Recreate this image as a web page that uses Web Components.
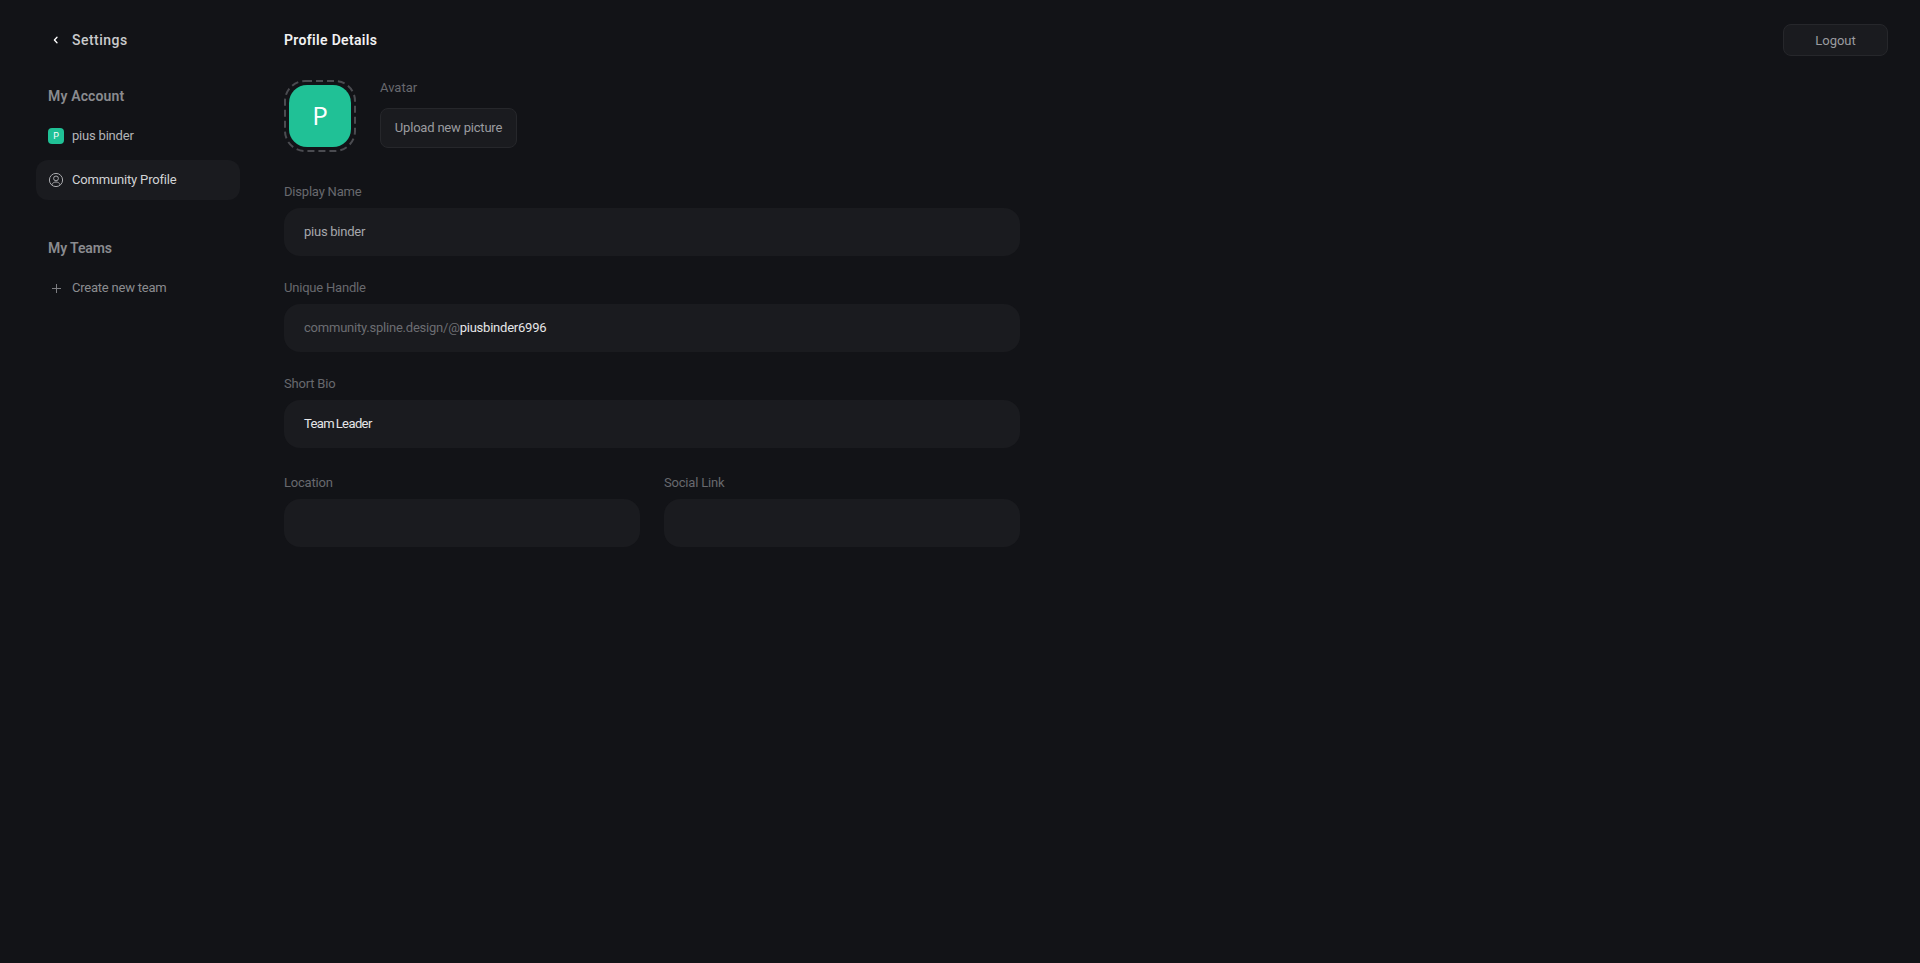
<!DOCTYPE html>
<html lang="en">
<head>
<meta charset="utf-8">
<title>Profile Details</title>
<style>
html,body{margin:0;height:100%;background:#121317;}
body{font-family:Roboto,"Liberation Sans",sans-serif;font-size:13px;color:#fff;}
</style>
</head>
<body>
<app-shell>
  <side-bar slot="side">
    <settings-head>Settings</settings-head>
    <section-label style="margin-top:28px;letter-spacing:.15px">My Account</section-label>
    <nav-item icon="avatar" tone="#b4b5b8" style="letter-spacing:-.2px">pius binder</nav-item>
    <nav-item icon="user" active tone="#d2d3d5" style="letter-spacing:-.17px">Community Profile</nav-item>
    <section-label style="margin-top:36px;letter-spacing:-.1px">My Teams</section-label>
    <nav-item icon="plus" tone="#8b8c90" style="letter-spacing:-.22px">Create new team</nav-item>
  </side-bar>
  <profile-form slot="main">
    <page-head>Profile Details</page-head>
    <avatar-block></avatar-block>
    <text-field label="Display Name" style="margin-top:32px" tone="#a6a7ab"><span style="letter-spacing:-.25px">pius binder</span></text-field>
    <text-field label="Unique Handle" style="margin-top:24px" tone="#e6e6e8"><span style="color:#6c6d72">community.spline.design/@</span>piusbinder6996</text-field>
    <text-field label="Short Bio" style="margin-top:24px" tone="#e6e6e8"><span style="letter-spacing:-.6px;word-spacing:-1px">Team Leader</span></text-field>
    <field-pair style="margin-top:27px">
      <text-field label="Location"></text-field>
      <text-field label="Social Link"></text-field>
    </field-pair>
  </profile-form>
  <ui-button slot="aside" class="logout" style="width:105px;height:32px;letter-spacing:0;padding-top:2px">Logout</ui-button>
</app-shell>
<script>
function def(name, css, html, init){
  customElements.define(name, class extends HTMLElement{
    constructor(){super();const r=this.attachShadow({mode:'open'});
      r.innerHTML='<style>'+css+'</style>'+(typeof html==='function'?html(this):html);}
    connectedCallback(){if(init)init(this);}
  });
}
def('app-shell',
 ':host{display:grid;grid-template-columns:284px 736px 1fr;min-height:100vh;box-sizing:border-box;}.aside{display:flex;justify-content:flex-end;align-items:flex-start;padding:24px 32px 0 0;}',
 '<slot name="side"></slot><slot name="main"></slot><div class="aside"><slot name="aside"></slot></div>');
def('side-bar',
 ':host{display:flex;flex-direction:column;padding:24px 44px 0 36px;box-sizing:border-box;}',
 '<slot></slot>');
def('settings-head',
 ':host{display:flex;align-items:center;height:32px;padding-left:12px;gap:12px;font-size:14px;font-weight:500;letter-spacing:.48px;color:#c9cacc;}svg{display:block;flex:none;}',
 '<svg width="12" height="12" viewBox="0 0 12 12" fill="none"><path d="M9 3.200 6.400 6 9 8.800" stroke="#fff" stroke-width="1.300" stroke-linecap="round" stroke-linejoin="round"/></svg><slot></slot>');
def('section-label',
 ':host{display:flex;align-items:center;height:24px;padding-left:12px;margin-bottom:8px;font-size:14px;font-weight:600;color:#8a8b8f;}',
 '<slot></slot>');
const icons={
 avatar:'<span class="av">P</span>',
 user:'<svg width="16" height="16" viewBox="0 0 16 16" fill="none" stroke="#a9aaad" stroke-width="1"><circle cx="8" cy="8" r="6.600"/><circle cx="8" cy="6.400" r="2.400"/><path d="M3.700 12.900c.8-1.900 2.400-2.900 4.300-2.900s3.500 1 4.300 2.900"/></svg>',
 plus:'<svg width="16" height="16" viewBox="0 0 16 16" fill="none" stroke="#7d7e82" stroke-width="1"><path d="M8.500 4v9M4 8.500h9"/></svg>'
};
def('nav-item',
 ':host{display:flex;align-items:center;gap:8px;height:40px;padding:0 12px;border-radius:12px;font-size:13px;color:var(--c);}:host([active]){background:#1a1b1f;margin-top:4px;}svg{display:block;flex:none;}.t{padding-bottom:1px;}.av{flex:none;width:16px;height:16px;border-radius:4px;background:#20c196;color:#fff;font-size:9px;letter-spacing:0;display:flex;align-items:center;justify-content:center;}',
 h=>(icons[h.getAttribute('icon')]||'')+'<span class="t"><slot></slot></span>',
 h=>h.style.setProperty('--c',h.getAttribute('tone')));
def('ui-button',
 ':host{display:inline-flex;align-items:center;justify-content:center;box-sizing:border-box;background:#1a1b1f;border:1px solid #26272b;border-radius:8px;font-size:13px;letter-spacing:-.2px;color:#9a9b9f;}.t{padding-bottom:1px;}',
 '<span class="t"><slot></slot></span>');
def('profile-form',
 ':host{display:flex;flex-direction:column;padding-top:24px;}',
 '<slot></slot>');
def('page-head',
 ':host{display:flex;align-items:center;height:32px;margin-bottom:24px;font-size:14px;font-weight:600;letter-spacing:.33px;color:#f1f1f2;}',
 '<slot></slot>');
def('avatar-block',
 ':host{display:flex;gap:24px;height:72px;}.ring{position:relative;width:72px;height:72px;flex:none;}.ring svg{display:block;}.tile{position:absolute;inset:5px;border-radius:18px;background:#20c196;display:flex;align-items:center;justify-content:center;font-size:26px;font-family:"Open Sans",Roboto,sans-serif;color:#fff;padding-bottom:2px;box-sizing:border-box;}.col{display:flex;flex-direction:column;align-items:flex-start;}.lab{height:16px;line-height:16px;font-size:13px;color:#68696e;margin-bottom:12px;}ui-button{width:137px;height:40px;}',
 '<div class="ring"><svg width="72" height="72" viewBox="0 0 72 72" fill="none"><rect x="1" y="1" width="70" height="70" rx="20" stroke="#4a4b50" stroke-width="2" stroke-dasharray="7 4"/></svg><div class="tile">P</div></div><div class="col"><div class="lab">Avatar</div><ui-button>Upload new picture</ui-button></div>');
def('text-field',
 ':host{display:block;min-width:0;}.lab{height:16px;line-height:16px;font-size:13px;letter-spacing:-.2px;color:#68696e;margin-bottom:8px;}.box{display:flex;align-items:center;height:48px;box-sizing:border-box;padding:0 20px 1px;background:#1a1b1f;border-radius:16px;font-size:13px;letter-spacing:-.22px;color:var(--c,#fff);}',
 h=>'<div class="lab">'+h.getAttribute('label')+'</div><div class="box"><span><slot></slot></span></div>',
 h=>{const t=h.getAttribute('tone');if(t)h.style.setProperty('--c',t);});
def('field-pair',
 ':host{display:grid;grid-template-columns:1fr 1fr;gap:24px;}',
 '<slot></slot>');
</script>
</body>
</html>
